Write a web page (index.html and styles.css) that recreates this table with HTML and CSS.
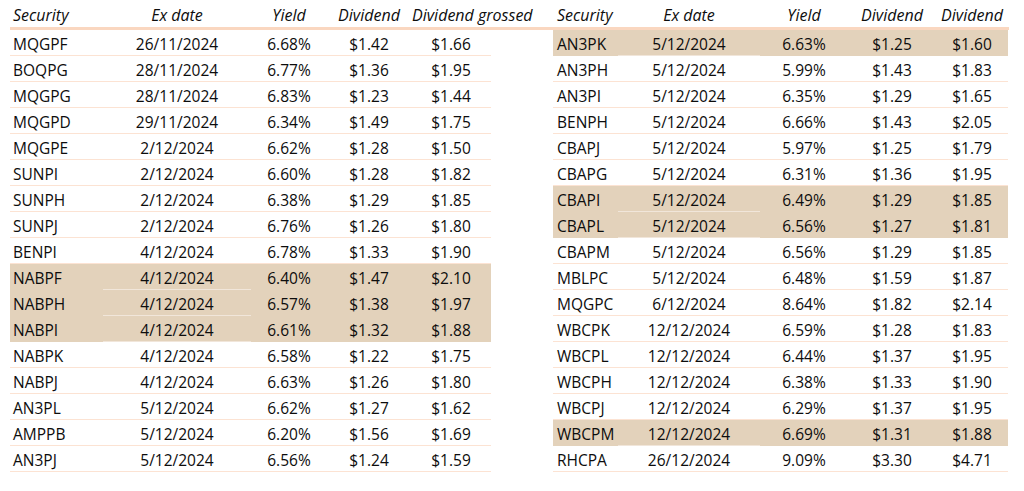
FILE: index.html
```html
<!DOCTYPE html>
<html>
<head>
<meta charset="utf-8">
<link rel="stylesheet" href="styles.css">
</head>
<body>
<div class="page">
  <div class="table left">
    <div class="head">
      <div class="c sec">Security</div><div class="c">Ex date</div><div class="c">Yield</div><div class="c">Dividend</div><div class="c over">Dividend grossed</div>
    </div>
    <div class="body">
      <div class="row"><div class="c sec">MQGPF</div><div class="c d">26/11/2024</div><div class="c">6.68%</div><div class="c">$1.42</div><div class="c">$1.66</div></div>
      <div class="row"><div class="c sec">BOQPG</div><div class="c d">28/11/2024</div><div class="c">6.77%</div><div class="c">$1.36</div><div class="c">$1.95</div></div>
      <div class="row"><div class="c sec">MQGPG</div><div class="c d">28/11/2024</div><div class="c">6.83%</div><div class="c">$1.23</div><div class="c">$1.44</div></div>
      <div class="row"><div class="c sec">MQGPD</div><div class="c d">29/11/2024</div><div class="c">6.34%</div><div class="c">$1.49</div><div class="c">$1.75</div></div>
      <div class="row"><div class="c sec">MQGPE</div><div class="c d">2/12/2024</div><div class="c">6.62%</div><div class="c">$1.28</div><div class="c">$1.50</div></div>
      <div class="row"><div class="c sec">SUNPI</div><div class="c d">2/12/2024</div><div class="c">6.60%</div><div class="c">$1.28</div><div class="c">$1.82</div></div>
      <div class="row"><div class="c sec">SUNPH</div><div class="c d">2/12/2024</div><div class="c">6.38%</div><div class="c">$1.29</div><div class="c">$1.85</div></div>
      <div class="row"><div class="c sec">SUNPJ</div><div class="c d">2/12/2024</div><div class="c">6.76%</div><div class="c">$1.26</div><div class="c">$1.80</div></div>
      <div class="row"><div class="c sec">BENPI</div><div class="c d">4/12/2024</div><div class="c">6.78%</div><div class="c">$1.33</div><div class="c">$1.90</div></div>
      <div class="row hl"><div class="c sec">NABPF</div><div class="c d">4/12/2024</div><div class="c">6.40%</div><div class="c">$1.47</div><div class="c">$2.10</div></div>
      <div class="row hl"><div class="c sec">NABPH</div><div class="c d">4/12/2024</div><div class="c">6.57%</div><div class="c">$1.38</div><div class="c">$1.97</div></div>
      <div class="row hl"><div class="c sec">NABPI</div><div class="c d">4/12/2024</div><div class="c">6.61%</div><div class="c">$1.32</div><div class="c">$1.88</div></div>
      <div class="row"><div class="c sec">NABPK</div><div class="c d">4/12/2024</div><div class="c">6.58%</div><div class="c">$1.22</div><div class="c">$1.75</div></div>
      <div class="row"><div class="c sec">NABPJ</div><div class="c d">4/12/2024</div><div class="c">6.63%</div><div class="c">$1.26</div><div class="c">$1.80</div></div>
      <div class="row"><div class="c sec">AN3PL</div><div class="c d">5/12/2024</div><div class="c">6.62%</div><div class="c">$1.27</div><div class="c">$1.62</div></div>
      <div class="row"><div class="c sec">AMPPB</div><div class="c d">5/12/2024</div><div class="c">6.20%</div><div class="c">$1.56</div><div class="c">$1.69</div></div>
      <div class="row"><div class="c sec">AN3PJ</div><div class="c d">5/12/2024</div><div class="c">6.56%</div><div class="c">$1.24</div><div class="c">$1.59</div></div>
    </div>
  </div>
  <div class="table right">
    <div class="head">
      <div class="c sec">Security</div><div class="c">Ex date</div><div class="c">Yield</div><div class="c">Dividend</div><div class="c">Dividend</div>
    </div>
    <div class="body">
      <div class="row hl"><div class="c sec">AN3PK</div><div class="c d">5/12/2024</div><div class="c">6.63%</div><div class="c">$1.25</div><div class="c">$1.60</div></div>
      <div class="row"><div class="c sec">AN3PH</div><div class="c d">5/12/2024</div><div class="c">5.99%</div><div class="c">$1.43</div><div class="c">$1.83</div></div>
      <div class="row"><div class="c sec">AN3PI</div><div class="c d">5/12/2024</div><div class="c">6.35%</div><div class="c">$1.29</div><div class="c">$1.65</div></div>
      <div class="row"><div class="c sec">BENPH</div><div class="c d">5/12/2024</div><div class="c">6.66%</div><div class="c">$1.43</div><div class="c">$2.05</div></div>
      <div class="row"><div class="c sec">CBAPJ</div><div class="c d">5/12/2024</div><div class="c">5.97%</div><div class="c">$1.25</div><div class="c">$1.79</div></div>
      <div class="row"><div class="c sec">CBAPG</div><div class="c d">5/12/2024</div><div class="c">6.31%</div><div class="c">$1.36</div><div class="c">$1.95</div></div>
      <div class="row hl"><div class="c sec">CBAPI</div><div class="c d">5/12/2024</div><div class="c">6.49%</div><div class="c">$1.29</div><div class="c">$1.85</div></div>
      <div class="row hl"><div class="c sec">CBAPL</div><div class="c d">5/12/2024</div><div class="c">6.56%</div><div class="c">$1.27</div><div class="c">$1.81</div></div>
      <div class="row"><div class="c sec">CBAPM</div><div class="c d">5/12/2024</div><div class="c">6.56%</div><div class="c">$1.29</div><div class="c">$1.85</div></div>
      <div class="row"><div class="c sec">MBLPC</div><div class="c d">5/12/2024</div><div class="c">6.48%</div><div class="c">$1.59</div><div class="c">$1.87</div></div>
      <div class="row"><div class="c sec">MQGPC</div><div class="c d">6/12/2024</div><div class="c">8.64%</div><div class="c">$1.82</div><div class="c">$2.14</div></div>
      <div class="row"><div class="c sec">WBCPK</div><div class="c d">12/12/2024</div><div class="c">6.59%</div><div class="c">$1.28</div><div class="c">$1.83</div></div>
      <div class="row"><div class="c sec">WBCPL</div><div class="c d">12/12/2024</div><div class="c">6.44%</div><div class="c">$1.37</div><div class="c">$1.95</div></div>
      <div class="row"><div class="c sec">WBCPH</div><div class="c d">12/12/2024</div><div class="c">6.38%</div><div class="c">$1.33</div><div class="c">$1.90</div></div>
      <div class="row"><div class="c sec">WBCPJ</div><div class="c d">12/12/2024</div><div class="c">6.29%</div><div class="c">$1.37</div><div class="c">$1.95</div></div>
      <div class="row hl"><div class="c sec">WBCPM</div><div class="c d">12/12/2024</div><div class="c">6.69%</div><div class="c">$1.31</div><div class="c">$1.88</div></div>
      <div class="row"><div class="c sec">RHCPA</div><div class="c d">26/12/2024</div><div class="c">9.09%</div><div class="c">$3.30</div><div class="c">$4.71</div></div>
    </div>
  </div>
</div>
</body>
</html>
```

FILE: styles.css
```css
* { box-sizing: border-box; }
html, body { margin: 0; padding: 0; background: #ffffff; }
body {
  font-family: "Open Sans", "Noto Sans", "Liberation Sans", sans-serif;
  font-size: 15.5px;
  color: #0d0d0d;
}
.page {
  display: flex;
  padding-left: 10px;
  width: 1024px;
  height: 491px;
}
.table { display: flex; flex-direction: column; }
.left { width: 543px; }
.right { width: 456px; }

.head {
  display: grid;
  height: 30px;
  border-bottom: 3px solid #fad7c0;
  font-style: italic;
  font-size: 16px;
  align-items: center;
  padding-top: 2px;
}
.left .head, .left .row { grid-template-columns: 93px 148px 76px 84px 80px; }
.right .head, .right .row { grid-template-columns: 65px 142px 88px 88px 72px; }
.left .body { width: 481px; }
.right .body { width: 455px; }

.c { text-align: center; white-space: nowrap; }
.c.sec { text-align: left; padding-left: 3px; }
.right .c.sec { padding-left: 4px; }
.head .c.over { text-align: left; padding-left: 1px; overflow: visible; }

.row {
  display: grid;
  height: 26px;
  align-items: stretch;
}
.row .c {
  border-bottom: 1px solid #fce3d3;
  display: flex;
  align-items: center;
  justify-content: center;
  padding-top: 2px;
}
.row .c.sec { justify-content: flex-start; }
.row.hl { background: #e3d2bb; }
.row.hl .c { border-bottom-color: #e3d2bb; }
.row.hl .c.d { border-bottom-color: #f1e6da; }
```
